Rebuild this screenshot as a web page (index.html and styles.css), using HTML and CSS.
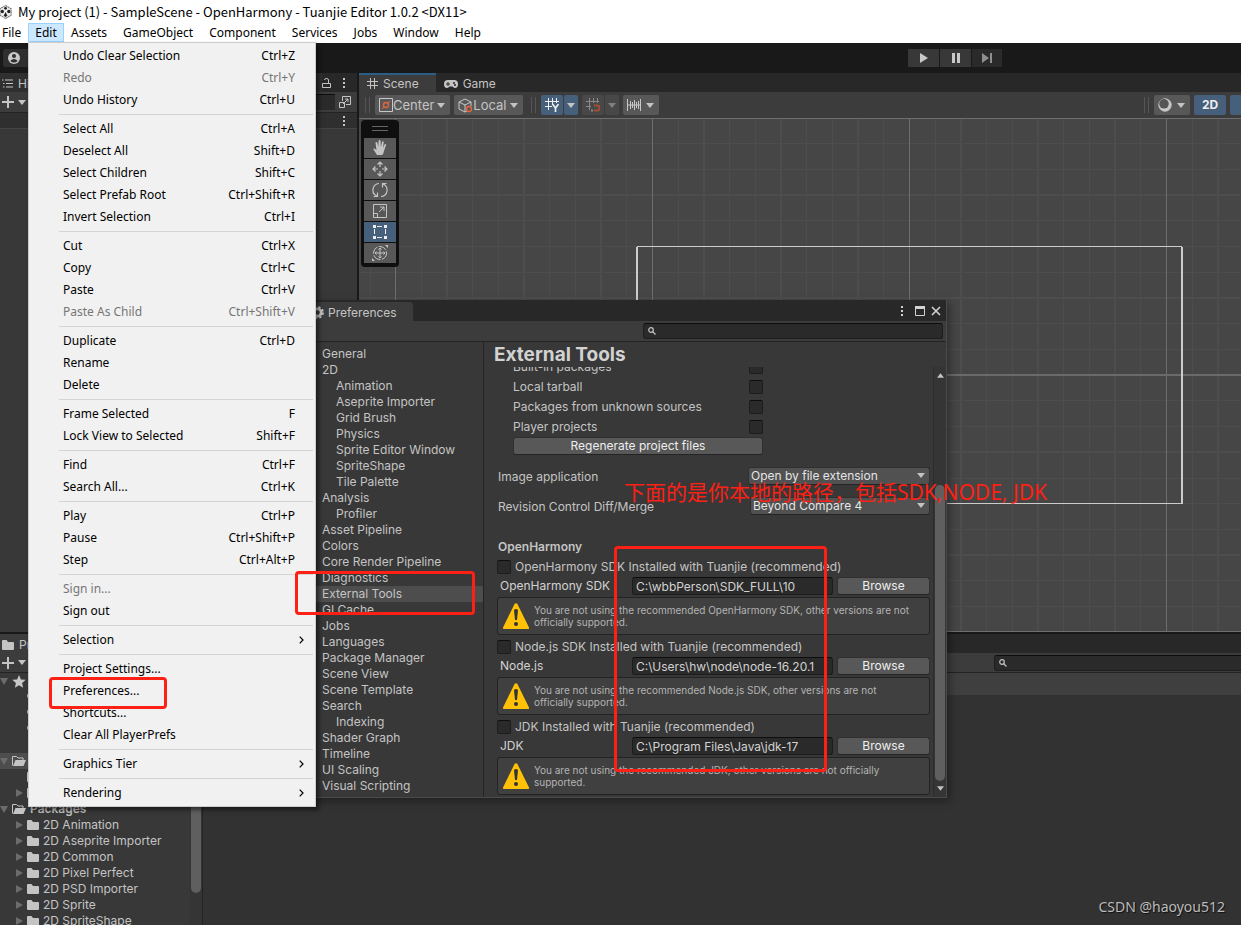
FILE: index.html
```html
<!DOCTYPE html>
<html lang="en">
<head>
<meta charset="utf-8">
<title>My project (1) - SampleScene - OpenHarmony - Tuanjie Editor 1.0.2</title>
<link rel="stylesheet" href="styles.css">
</head>
<body>
<svg class="defs" aria-hidden="true">
  <symbol id="kebab" viewBox="0 0 4 12"><path d="M1 1h2v2H1zM1 5h2v2H1zM1 9h2v2H1z" fill="currentColor"/></symbol>
  <symbol id="caret" viewBox="0 0 8 5"><path d="M0 0h8L4 5z" fill="currentColor"/></symbol>
  <symbol id="fold" viewBox="0 0 8 8"><path d="M1 0l7 4-7 4z" fill="currentColor"/></symbol>
  <symbol id="folder" viewBox="0 0 12 10"><path d="M0 1q0-1 1-1h3.500l1.500 2H11q1 0 1 1v6q0 1-1 1H1q-1 0-1-1z" fill="currentColor"/></symbol>
  <symbol id="folder-open" viewBox="0 0 14 10"><path d="M.5 9.500V.5h4l1.500 1.500h5v2" fill="none" stroke="currentColor"/><path d="M3.500 4H14l-2.500 6H1z" fill="currentColor"/></symbol>
  <symbol id="search" viewBox="0 0 8 8"><circle cx="3" cy="3" r="2.300" fill="none" stroke="currentColor" stroke-width="1.200"/><path d="M4.600 4.600L7.500 7.500" stroke="currentColor" stroke-width="1.300"/></symbol>
  <symbol id="plus" viewBox="0 0 12 12"><path d="M6 0v12M0 6h12" stroke="currentColor" stroke-width="2"/></symbol>
  <symbol id="chevron" viewBox="0 0 5 8"><path d="M.7.7L4 4 .7 7.300" fill="none" stroke="currentColor" stroke-width="1.200"/></symbol>
  <symbol id="warning" viewBox="0 0 26 26"><path d="M11.700.8q1.300-1.300 2.600 0L26 24.500q.2 1.500-1.200 1.500H1.200Q-.2 26 0 24.500z" fill="#ffc107"/><path d="M11 7q2-1.800 4 0l-1 10h-2z" fill="#333"/><circle cx="13" cy="21" r="2" fill="#333"/></symbol>
</svg>

<header class="titlebar">
  <svg class="app-icon" viewBox="0 0 14 16"><path d="M6 1l6 3.500v7L6 15 0 11.500v-7z" fill="#eee" stroke="#777" stroke-width="1.200" stroke-dasharray="2 .6"/><circle cx="6" cy="4" r="1.500" fill="#222"/><circle cx="2.500" cy="7.500" r="1.800" fill="#222"/><circle cx="9.500" cy="7.500" r="1.800" fill="#222"/><path d="M4 12l2-4 2 4-2 1.500z" fill="#222"/></svg>
  <span>My project (1) - SampleScene - OpenHarmony - Tuanjie Editor 1.0.2 &lt;DX11&gt;</span>
</header>

<nav class="menubar">
  <button class="first">File</button>
  <div class="menu-host">
    <button class="open">Edit</button>
    <div class="menu">
      <button><span>Undo Clear Selection</span><kbd>Ctrl+Z</kbd></button>
      <button disabled><span>Redo</span><kbd>Ctrl+Y</kbd></button>
      <button><span>Undo History</span><kbd>Ctrl+U</kbd></button>
      <hr>
      <button><span>Select All</span><kbd>Ctrl+A</kbd></button>
      <button><span>Deselect All</span><kbd>Shift+D</kbd></button>
      <button><span>Select Children</span><kbd>Shift+C</kbd></button>
      <button><span>Select Prefab Root</span><kbd>Ctrl+Shift+R</kbd></button>
      <button><span>Invert Selection</span><kbd>Ctrl+I</kbd></button>
      <hr>
      <button><span>Cut</span><kbd>Ctrl+X</kbd></button>
      <button><span>Copy</span><kbd>Ctrl+C</kbd></button>
      <button><span>Paste</span><kbd>Ctrl+V</kbd></button>
      <button disabled><span>Paste As Child</span><kbd>Ctrl+Shift+V</kbd></button>
      <hr>
      <button><span>Duplicate</span><kbd>Ctrl+D</kbd></button>
      <button><span>Rename</span></button>
      <button><span>Delete</span></button>
      <hr>
      <button><span>Frame Selected</span><kbd>F</kbd></button>
      <button><span>Lock View to Selected</span><kbd>Shift+F</kbd></button>
      <hr>
      <button><span>Find</span><kbd>Ctrl+F</kbd></button>
      <button><span>Search All...</span><kbd>Ctrl+K</kbd></button>
      <hr>
      <button><span>Play</span><kbd>Ctrl+P</kbd></button>
      <button><span>Pause</span><kbd>Ctrl+Shift+P</kbd></button>
      <button><span>Step</span><kbd>Ctrl+Alt+P</kbd></button>
      <hr>
      <button disabled><span>Sign in...</span></button>
      <button><span>Sign out</span></button>
      <hr>
      <button class="sub"><span>Selection</span><svg><use href="#chevron"/></svg></button>
      <hr>
      <button><span>Project Settings...</span></button>
      <button><span>Preferences...</span></button>
      <button><span>Shortcuts...</span></button>
      <button><span>Clear All PlayerPrefs</span></button>
      <hr>
      <button class="sub"><span>Graphics Tier</span><svg><use href="#chevron"/></svg></button>
      <hr>
      <button class="sub"><span>Rendering</span><svg><use href="#chevron"/></svg></button>
    </div>
  </div>
  <button>Assets</button>
  <button>GameObject</button>
  <button>Component</button>
  <button>Services</button>
  <button>Jobs</button>
  <button>Window</button>
  <button>Help</button>
</nav>

<div class="main-toolbar">
  <button class="account" aria-label="Account"><svg width="12" height="12" viewBox="0 0 12 12"><circle cx="6" cy="6" r="6" fill="#c8c8c8"/><circle cx="6" cy="4" r="2" fill="#2f2f2f"/><path d="M2.300 9q3.700-4 7.400 0-3.700 3-7.400 0" fill="#2f2f2f"/></svg></button>
  <div class="play-controls">
    <button aria-label="Play"><svg width="10" height="10" viewBox="0 0 10 10"><path d="M1 0l8 5-8 5z" fill="#c8c8c8"/></svg></button>
    <button aria-label="Pause"><svg width="10" height="10" viewBox="0 0 10 10"><path d="M1 0h3v10H1zM6 0h3v10H6z" fill="#c8c8c8"/></svg></button>
    <button class="dim" aria-label="Step"><svg width="10" height="10" viewBox="0 0 10 10"><path d="M0 0l7 5-7 5zM8 0h2v10H8z" fill="#8f8f8f"/></svg></button>
  </div>
</div>

<main class="docks">
  <section class="hierarchy">
    <div class="tabs">
      <div class="tab"><svg width="11" height="9" viewBox="0 0 11 9"><path d="M3 1h8M4 4.500h7M4 8h7M0 1h1.500M1 4.500h1.500M1 8h1.500" stroke="currentColor"/></svg><span>Hierarchy</span></div>
      <svg class="lock" width="9" height="10" viewBox="0 0 9 10"><path d="M.5 5.500h8v4h-8zM6.500 5.500V2q0-1.500-2-1.500T2.500 2" fill="none" stroke="currentColor"/></svg>
      <svg class="kebab"><use href="#kebab"/></svg>
    </div>
    <div class="tool-row">
      <svg class="plus"><use href="#plus"/></svg><svg class="caret"><use href="#caret"/></svg>
      <div class="mini-search"></div>
      <svg class="expand" width="12" height="12" viewBox="0 0 12 12"><path d="M3.500 5V.5h8v8H7M.5 6.500h5v5h-5zM4 8l5-5M6 3h3v3" fill="none" stroke="currentColor"/></svg>
    </div>
    <div class="scene-row"><svg class="kebab"><use href="#kebab"/></svg></div>
  </section>

  <section class="scene">
    <div class="tabs">
      <div class="tab active"><svg width="11" height="11" viewBox="0 0 11 11"><path d="M3.500 0v11M7.500 0v11M0 3.500h11M0 7.500h11" stroke="currentColor"/></svg><span>Scene</span></div>
      <div class="tab"><svg width="14" height="8" viewBox="0 0 14 8"><path d="M4 0h6q4 0 4 4t-3 4Q10 8 8.500 6.500h-3Q4 8 3 8 0 8 0 4t4-4" fill="currentColor"/><path d="M4 2v4M2 4h4" stroke="#282828"/><circle cx="10" cy="3" r="1" fill="#282828"/><circle cx="11" cy="5" r="1" fill="#282828"/></svg><span>Game</span></div>
    </div>
    <div class="scene-tools">
      <i class="grip"></i>
      <button class="tool"><svg width="14" height="14" viewBox="0 0 14 14"><path d="M.5.5h13v13H.5z" fill="none" stroke="#c8c8c8"/><circle cx="7" cy="7" r="2.500" fill="none" stroke="#e8663c" stroke-width="1.300"/><path d="M3 11l2-2M9 5l2-2" stroke="#e8663c"/></svg><span>Center</span><svg class="caret"><use href="#caret"/></svg></button>
      <button class="tool"><svg width="15" height="15" viewBox="0 0 15 15"><path d="M9 13l-2 1-6-3V4l6-3 6 3v4M1 4l6 3 6-3M7 7v7" fill="none" stroke="#c8c8c8"/><circle cx="11" cy="11" r="2.500" fill="#585858" stroke="#e8663c" stroke-width="1.300"/></svg><span>Local</span><svg class="caret"><use href="#caret"/></svg></button>
      <i class="grip wide"></i>
      <div class="split">
        <button class="tool blue icon" aria-label="Grid"><svg width="14" height="14" viewBox="0 0 14 14"><path d="M3.500 0v12M7.500 0v7M11.500 0v5M0 3.500h14M0 8.500h7" stroke="#eee"/><path d="M7.500 6l3 4 3-4M10.500 10v4" fill="none" stroke="#eee" stroke-width="1.700"/></svg></button><button class="tool blue arrow" aria-label="Grid options"><svg class="caret"><use href="#caret"/></svg></button>
      </div>
      <div class="split off">
        <button class="tool icon" aria-label="Snap"><svg width="14" height="14" viewBox="0 0 14 14"><path d="M3.500 0v12M7.500 0v5M11.500 0v5M0 3.500h13M0 8.500h5" stroke="#888"/><path d="M8 7.500h3.500q2 0 2 2.500t-2 2.500H8" fill="none" stroke="#a14f35" stroke-width="2"/><path d="M5 12.500h2" stroke="#888" stroke-width="2"/></svg></button><button class="tool arrow" aria-label="Snap options"><svg class="caret"><use href="#caret"/></svg></button>
      </div>
      <button class="tool ruler" aria-label="Increment"><svg width="14" height="12" viewBox="0 0 14 12"><path d="M.5 0v12M13.500 0v12M3.500 2v8M5.500 3v6M7.500 1v10M9.500 3v6M11.500 2v8M0 6h14" stroke="#c8c8c8"/></svg><svg class="caret"><use href="#caret"/></svg></button>
      <i class="grip right"></i>
      <button class="tool shade" aria-label="Shading"><svg width="14" height="14" viewBox="0 0 14 14"><circle cx="7" cy="7" r="6.200" fill="#c8c8c8" stroke="#c8c8c8"/><circle cx="6" cy="5.800" r="4.800" fill="#555"/></svg><svg class="caret"><use href="#caret"/></svg></button>
      <button class="tool blue two-d">2D</button>
      <button class="tool blue cut" aria-label="Lighting"></button>
    </div>
    <div class="viewport">
      <svg class="grid" aria-hidden="true">
        <g transform="translate(-359 -118)">
          <path class="thin" d="M370.500 118v514M421.500 118v514M472.500 118v514M498.500 118v514M549.500 118v514M575.500 118v514M626.500 118v514M678.500 118v514M729.500 118v514M755.500 118v514M806.500 118v514M832.500 118v514M883.500 118v514M935.500 118v514M986.500 118v514M1012.500 118v514M1063.500 118v514M1089.500 118v514M1140.500 118v514M1192.500 118v514M359 143.500h1600M359 169.500h1600M359 220.500h1600M359 246.500h1600M359 272.500h1600M359 323.500h1600M359 349.500h1600M359 400.500h1600M359 426.500h1600M359 478.500h1600M359 503.500h1600M359 529.500h1600M359 580.500h1600M359 606.500h1600"/>
          <path class="mid" d="M447 118v514M524 118v514M601 118v514M704 118v514M781 118v514M858 118v514M961 118v514M1038 118v514M1115 118v514M1218 118v514M359 195h1600M359 298h1600M359 452h1600M359 555h1600"/>
          <path class="strong" d="M395.500 118v514M652.500 118v514M909.500 118v514M1166.500 118v514M359 118.500h1600M359 631.500h1600"/>
          <path class="axis" d="M359 375h1600"/>
          <path class="canvas-h" d="M637 246.500h545M637 503.500h545"/>
          <path class="canvas-v" d="M637 247v257M1182 247v257"/>
        </g>
      </svg>
      <div class="tool-strip">
        <i></i>
        <button aria-label="Hand"><svg width="16" height="16" viewBox="0 0 16 16"><path d="M5 15L1.500 9.500q-.3-1.300 1-1L4.500 10 3.500 3q0-1 .8-1T5.500 3l.8 4 .3-6q.2-1 1-1t1 1l.2 6 1.200-5q.3-1 1-.8t.7 1L11 8l1.500-3.500q.5-.8 1.200-.4t.3 1.200L12 11q-.5 3-2 4z" fill="currentColor"/></svg></button>
        <button aria-label="Move"><svg width="16" height="16" viewBox="0 0 16 16"><path d="M8 1v5M8 10v5M1 8h5M10 8h5M5.500 3.500L8 1l2.500 2.500M5.500 12.500L8 15l2.500-2.500M3.500 5.500L1 8l2.500 2.500M12.500 5.500L15 8l-2.500 2.500" fill="none" stroke="currentColor" stroke-width="1.200"/></svg></button>
        <button aria-label="Rotate"><svg width="16" height="16" viewBox="0 0 16 16"><path d="M7 1.500A6.500 6.500 0 0 0 5 14M1.500 14.500H5.500V10.500M9 14.500A6.500 6.500 0 0 0 11 2M14.500 1.500H10.500V5.500" fill="none" stroke="currentColor" stroke-width="1.200"/></svg></button>
        <button aria-label="Scale"><svg width="16" height="16" viewBox="0 0 16 16"><path d="M1.500 1.500h13v13h-13zM1.500 10.500h4v4M7 9l5-5M8 4h4v4" fill="none" stroke="currentColor"/></svg></button>
        <button class="on" aria-label="Rect"><svg width="16" height="16" viewBox="0 0 16 16"><path d="M1 1h3v3H1zM12 1h3v3h-3zM1 12h3v3H1zM12 12h3v3h-3z" fill="#eee"/><path d="M5 2.500h6M5 13.500h6M2.500 5v6M13.500 5v6" stroke="#eee" stroke-dasharray="5 1"/></svg></button>
        <button aria-label="Transform"><svg width="16" height="16" viewBox="0 0 16 16"><circle cx="8" cy="8" r="6.500" fill="none" stroke="currentColor" stroke-dasharray="8 1.500"/><path d="M8 3v10M3 8h10M6.500 4.500L8 3l1.500 1.500M6.500 11.500L8 13l1.500-1.500M4.500 6.500L3 8l1.500 1.500M11.500 6.500L13 8l-1.500 1.500" fill="none" stroke="currentColor"/><path d="M13 0h3v3zM0 13l3 3H0z" fill="currentColor"/></svg></button>
      </div>
    </div>
  </section>
</main>

<section class="project">
  <div class="tabs"><div class="tab"><svg width="12" height="10"><use href="#folder"/></svg><span>Project</span></div></div>
  <div class="tool-row">
    <svg class="plus"><use href="#plus"/></svg><svg class="caret"><use href="#caret"/></svg>
    <label class="search"><svg><use href="#search"/></svg><input type="text" aria-label="Search project"></label>
  </div>
  <div class="project-body">
    <div class="tree">
      <div class="tree-row"><svg class="fold down"><use href="#fold"/></svg><svg width="14" height="13" viewBox="0 0 14 13"><path d="M7 0l1.900 4.400 4.800.4-3.600 3.200 1 4.800L7 10.300l-4.100 2.500 1-4.800L.3 4.800l4.800-.4z" fill="#c8c8c8"/></svg></div>
      <div class="tree-row leaf"><svg class="lens"><use href="#search"/></svg></div>
      <div class="tree-row leaf"><svg class="lens"><use href="#search"/></svg></div>
      <div class="tree-row leaf"><svg class="lens"><use href="#search"/></svg></div>
      <div class="tree-row"></div>
      <div class="tree-row picked"><svg class="fold down"><use href="#fold"/></svg><svg width="14" height="10"><use href="#folder-open"/></svg></div>
      <div class="tree-row leaf"><svg width="12" height="10"><use href="#folder"/></svg></div>
      <div class="tree-row child"><svg class="fold"><use href="#fold"/></svg><svg width="12" height="10"><use href="#folder"/></svg></div>
      <div class="tree-row"><svg class="fold down"><use href="#fold"/></svg><svg width="14" height="10"><use href="#folder-open"/></svg><b>Packages</b></div>
      <div class="tree-row child"><svg class="fold"><use href="#fold"/></svg><svg width="12" height="10"><use href="#folder"/></svg><span>2D Animation</span></div>
      <div class="tree-row child"><svg class="fold"><use href="#fold"/></svg><svg width="12" height="10"><use href="#folder"/></svg><span>2D Aseprite Importer</span></div>
      <div class="tree-row child"><svg class="fold"><use href="#fold"/></svg><svg width="12" height="10"><use href="#folder"/></svg><span>2D Common</span></div>
      <div class="tree-row child"><svg class="fold"><use href="#fold"/></svg><svg width="12" height="10"><use href="#folder"/></svg><span>2D Pixel Perfect</span></div>
      <div class="tree-row child"><svg class="fold"><use href="#fold"/></svg><svg width="12" height="10"><use href="#folder"/></svg><span>2D PSD Importer</span></div>
      <div class="tree-row child"><svg class="fold"><use href="#fold"/></svg><svg width="12" height="10"><use href="#folder"/></svg><span>2D Sprite</span></div>
      <div class="tree-row child"><svg class="fold"><use href="#fold"/></svg><svg width="12" height="10"><use href="#folder"/></svg><span>2D SpriteShape</span></div>
    </div>
    <div class="tree-scroll"><i></i></div>
    <div class="assets"><div class="crumbs"></div></div>
  </div>
</section>

<section class="prefs">
  <div class="prefs-tabs">
    <div class="prefs-tab"><svg width="13" height="13" viewBox="0 0 13 13"><circle cx="6.500" cy="6.500" r="3.600" fill="none" stroke="#c8c8c8" stroke-width="2.600"/><circle cx="6.500" cy="6.500" r="5.600" fill="none" stroke="#c8c8c8" stroke-width="1.600" stroke-dasharray="2.400 2"/></svg><span>Preferences</span></div>
    <div class="win-buttons">
      <button aria-label="More"><svg width="4" height="12"><use href="#kebab"/></svg></button>
      <button aria-label="Maximize"><svg width="10" height="10" viewBox="0 0 10 10"><path d="M.5.500h9v9h-9z" fill="none" stroke="#d2d2d2"/><path d="M0 0h10v3H0z" fill="#d2d2d2"/></svg></button>
      <button aria-label="Close"><svg width="10" height="10" viewBox="0 0 10 10"><path d="M1 1l8 8M9 1L1 9" stroke="#d2d2d2" stroke-width="1.600"/></svg></button>
    </div>
  </div>
  <div class="prefs-toolbar"><label class="search"><svg><use href="#search"/></svg><input type="text" aria-label="Search preferences"></label></div>
  <div class="prefs-body">
    <ul class="prefs-nav">
      <li>General</li><li>2D</li><li class="in">Animation</li><li class="in">Aseprite Importer</li><li class="in">Grid Brush</li><li class="in">Physics</li><li class="in">Sprite Editor Window</li><li class="in">SpriteShape</li><li class="in">Tile Palette</li><li>Analysis</li><li class="in">Profiler</li><li>Asset Pipeline</li><li>Colors</li><li>Core Render Pipeline</li><li>Diagnostics</li><li class="on">External Tools</li><li>GI Cache</li><li>Jobs</li><li>Languages</li><li>Package Manager</li><li>Scene View</li><li>Scene Template</li><li>Search</li><li class="in">Indexing</li><li>Shader Graph</li><li>Timeline</li><li>UI Scaling</li><li>Visual Scripting</li>
    </ul>
    <div class="prefs-pane">
      <h1>External Tools</h1>
      <div class="pane-scroll">
        <div class="pane-content">
          <div class="check-rows">
            <label><span>Built-in packages</span><input type="checkbox"></label>
            <label><span>Local tarball</span><input type="checkbox"></label>
            <label><span>Packages from unknown sources</span><input type="checkbox"></label>
            <label><span>Player projects</span><input type="checkbox"></label>
            <button class="btn">Regenerate project files</button>
          </div>
          <div class="drop-row"><label for="img">Image application</label><div class="drop"><select id="img"><option>Open by file extension</option></select><svg class="caret"><use href="#caret"/></svg></div></div>
          <div class="drop-row"><label for="diff">Revision Control Diff/Merge</label><div class="drop narrow"><select id="diff"><option>Beyond Compare 4</option></select><svg class="caret"><use href="#caret"/></svg></div></div>
          <h2>OpenHarmony</h2>
          <div class="sdk">
            <label class="sdk-check"><input type="checkbox"><span>OpenHarmony SDK Installed with Tuanjie (recommended)</span></label>
            <div class="sdk-path"><label for="p1">OpenHarmony SDK</label><input id="p1" type="text" value="C:\wbbPerson\SDK_FULL\10"><button class="btn">Browse</button></div>
            <div class="help"><svg><use href="#warning"/></svg><p>You are not using the recommended OpenHarmony SDK, other versions are not officially supported.</p></div>
          </div>
          <div class="sdk">
            <label class="sdk-check"><input type="checkbox"><span>Node.js SDK Installed with Tuanjie (recommended)</span></label>
            <div class="sdk-path"><label for="p2">Node.js</label><input id="p2" type="text" value="C:\Users\hw\node\node-16.20.1"><button class="btn">Browse</button></div>
            <div class="help"><svg><use href="#warning"/></svg><p>You are not using the recommended Node.js SDK, other versions are not officially supported.</p></div>
          </div>
          <div class="sdk">
            <label class="sdk-check"><input type="checkbox"><span>JDK Installed with Tuanjie (recommended)</span></label>
            <div class="sdk-path"><label for="p3">JDK</label><input id="p3" type="text" value="C:\Program Files\Java\jdk-17"><button class="btn">Browse</button></div>
            <div class="help"><svg><use href="#warning"/></svg><p>You are not using the recommended JDK, other versions are not officially supported.</p></div>
          </div>
        </div>
        <div class="pane-bar"><svg class="up"><use href="#caret"/></svg><i></i><svg><use href="#caret"/></svg></div>
      </div>
    </div>
  </div>
</section>

<div class="mark mark-menu"></div>
<div class="mark mark-nav"></div>
<div class="mark mark-paths"></div>
<p class="note" lang="zh-CN">下面的是你本地的路径，包括SDK,NODE, JDK</p>
<p class="watermark">CSDN @haoyou512</p>
</body>
</html>
```
FILE: styles.css
```css
* { box-sizing: border-box; }

body {
  margin: 0;
  position: relative;
  height: 100vh;
  overflow: hidden;
  display: flex;
  flex-direction: column;
  background: #191919;
  color: #c4c4c4;
  font: 12px/16px Inter, "Liberation Sans", sans-serif;
}

button, input, select { font: inherit; color: inherit; border: 0; margin: 0; padding: 0; background: none; }
svg { flex: none; display: block; }
p, h1, h2, ul { margin: 0; padding: 0; }
.defs { position: absolute; width: 0; height: 0; }
.caret { width: 8px; height: 5px; }
.kebab { width: 4px; height: 12px; }
.plus { width: 12px; height: 12px; }

/* Title and menu bars */
.titlebar, .menubar { background: #fff; color: #000; flex: none; }
.titlebar { display: flex; align-items: center; gap: 5px; height: 23px; font: 13px/20px "Noto Sans CJK SC", "Noto Sans", sans-serif; }
.app-icon { width: 13px; height: 16px; }
.menubar { display: flex; height: 20px; font: 12px/20px "Noto Sans", sans-serif; }
.menubar > button, .open { height: 20px; padding: 0 9px 0 7px; }
.menubar > .first { width: 28px; padding: 0 0 0 2px; text-align: left; }
.menu-host { position: relative; }
.menubar .open { width: 36px; padding: 0; height: 19px; line-height: 17px; background: #cce8ff; border: 1px solid #99d1ff; }
.menu {
  position: absolute;
  z-index: 5;
  top: 19px;
  left: 0;
  width: 288px;
  padding: 2px;
  border: 1px solid #ccc;
  background: #f1f1f1;
  box-shadow: 3px 3px 4px rgba(0, 0, 0, .5);
}
.menu button { display: flex; align-items: center; justify-content: space-between; width: 100%; height: 22px; padding: 0 18px 0 32px; }
.menu button:disabled { color: #767676; }
.menu .sub { padding-right: 9px; }
.menu svg { width: 5px; height: 8px; }
.menu kbd { font: inherit; }
.menu hr { height: 1px; margin: 3px 0 3px 28px; border: 0; background: #d4d4d4; }

/* Main toolbar */
.main-toolbar { flex: none; display: flex; justify-content: space-between; align-items: center; height: 30px; padding-left: 3px; }
.main-toolbar button { display: flex; align-items: center; justify-content: center; height: 18px; background: #383838; }
.main-toolbar .account { width: 40px; padding-left: 5px; justify-content: flex-start; background: #2f2f2f; border-radius: 2px; }
.play-controls { display: flex; gap: 1px; margin-right: 239px; }
.play-controls button { width: 31px; }
.play-controls .dim { width: 30px; background: #2a2a2a; }

/* Docked panels */
.docks { flex: none; display: flex; gap: 2px; height: 559px; }
.tabs { display: flex; align-items: center; height: 19px; background: #282828; flex: none; }
.tab { display: flex; align-items: center; gap: 5px; height: 19px; padding: 2px 8px 0; }
.tab.active { background: #3c3c3c; border-top: 2px solid #2c5d87; padding-top: 0; }
.tool-row { display: flex; align-items: center; height: 20px; padding-left: 2px; gap: 5px; background: #3c3c3c; flex: none; }
.hierarchy { flex: none; width: 357px; display: flex; flex-direction: column; background: #383838; }
.hierarchy .tabs, .scene-row { padding-right: 11px; }
.hierarchy .tab { padding: 2px 0 0 2px; flex: 1; background: #303030; }
.hierarchy .lock { margin-right: 11px; }
.hierarchy .tool-row { padding-right: 6px; gap: 4px; }
.mini-search { flex: 1; height: 16px; background: #2a2a2a; border-top: 1px solid #0d0d0d; }
.scene-row { display: flex; align-items: center; justify-content: flex-end; height: 17px; background: #2f2f2f; border-top: 1px solid #232323; border-bottom: 1px solid #444; }

.scene { flex: 1; min-width: 0; display: flex; flex-direction: column; }
.scene .tab.active { padding-right: 17px; }
.scene-tools { display: flex; align-items: center; height: 26px; padding-left: 6px; gap: 4px; background: #3c3c3c; flex: none; overflow: hidden; }
.grip { flex: none; width: 5px; height: 16px; border: solid #555; border-width: 0 1px; margin-right: 1px; }
.grip.wide { margin: 0 1px 0 4px; }
.grip.right { margin-left: auto; }
.tool { display: flex; flex: none; align-items: center; height: 20px; padding: 0 5px 0 4px; background: #585858; border-radius: 2px; font-size: 13px; }
.tool .caret { margin-left: 3px; }
.tool.ruler .caret, .tool.shade .caret { margin-left: 5px; }
.tool.blue { background: #46607c; }
.split { display: flex; gap: 1px; }
.split .tool { padding: 0 4px; }
.split .tool.arrow { padding: 0 3px; }
.tool.arrow .caret { margin: 0; }
.split.off .tool { background: #484848; color: #808080; }
.tool.two-d { padding: 0 8px; width: 32px; font-size: 12px; font-weight: 700; color: #eee; }
.tool.cut { width: 11px; border-radius: 2px 0 0 2px; }

.viewport { position: relative; flex: 1; background: #464646; overflow: hidden; }
.grid { position: absolute; inset: 0; width: 100%; height: 100%; }
.grid path { fill: none; }
.thin { stroke: #4d4d4d; }
.mid { stroke: #4d4d4d; stroke-width: 2; }
.strong { stroke: #6e6e6e; }
.axis { stroke: #6a6a6a; stroke-width: 2; }
.canvas-h { stroke: #ccc; }
.canvas-v { stroke: #ccc; stroke-width: 2; }
.tool-strip { position: absolute; left: 2px; top: 2px; display: flex; flex-direction: column; gap: 1px; padding: 6px 3px 4px; background: #0f0f0f; border-radius: 4px; }
.tool-strip i { width: 16px; height: 5px; margin: 0 auto 6px; border: solid #666; border-width: 1px 0; }
.tool-strip button { display: flex; align-items: center; justify-content: center; width: 32px; height: 20px; background: #585858; }
.tool-strip .on { background: #46607c; }

/* Project browser */
.project { flex: 1; min-height: 0; margin-top: 2px; display: flex; flex-direction: column; background: #383838; }
.project .tab { padding-left: 2px; width: 90px; background: #3c3c3c; }
.project > .tool-row { border-bottom: 1px solid #232323; gap: 4px; }
.search { display: flex; align-items: center; height: 16px; gap: 5px; padding: 0 4px; border: 1px solid #1e1e1e; border-top-color: #0d0d0d; border-radius: 3px; background: #2a2a2a; }
.search svg { width: 8px; height: 8px; }
.search input { flex: 1; min-width: 0; }
.project .search { width: 247px; margin-left: auto; border-right: 0; border-radius: 3px 0 0 3px; }
.project-body { flex: 1; min-height: 0; display: flex; }
.tree { flex: 1; overflow: hidden; }
.tree-row { display: flex; align-items: center; gap: 4px; height: 16px; white-space: nowrap; }
.tree-row.picked { background: #4d4d4d; }
.tree-row.leaf { padding-left: 27px; }
.tree-row.child { padding-left: 15px; }
.tree-row b { font-weight: 600; }
.fold { width: 8px; height: 8px; color: #6c6c6c; }
.fold.down { transform: rotate(90deg); }
.lens { width: 10px; height: 10px; }
.tree-scroll { flex: none; width: 13px; padding: 0 1px; background: #353535; border-right: 1px solid #232323; }
.tree-scroll i { display: block; height: 220px; border-radius: 5px; background: #5f5f5f; }
.assets { flex: none; width: calc(100% - 203px); background: #323232; }
.crumbs { height: 22px; background: #3f3f3f; }

/* Preferences window */
.prefs {
  position: absolute;
  left: 308px;
  top: 300px;
  width: 639px;
  height: 498px;
  display: flex;
  flex-direction: column;
  border: 1px solid #4a4a4a;
  border-width: 0 1px 1px 0;
  background: #383838;
  box-shadow: 3px 3px 8px rgba(0, 0, 0, .35);
}
.prefs-tabs { display: flex; justify-content: space-between; height: 21px; background: #282828; flex: none; }
.prefs-tab { display: flex; align-items: center; gap: 4px; width: 105px; height: 19px; margin-top: 2px; padding-left: 3px; padding-top: 2px; background: #3c3c3c; border-radius: 0 3px 0 0; }
.win-buttons { display: flex; align-items: center; gap: 6px; padding-right: 5px; color: #d2d2d2; }
.win-buttons button:first-child { margin-right: 5px; }
.prefs-toolbar { display: flex; justify-content: flex-end; align-items: center; height: 21px; padding-right: 3px; background: #3c3c3c; border-bottom: 1px solid #232323; flex: none; }
.prefs .search { width: 300px; }
.prefs-body { flex: 1; min-height: 0; display: flex; }
.prefs-nav { flex: none; width: 176px; padding-top: 4px; list-style: none; border-right: 1px solid #232323; }
.prefs-nav li { padding-left: 14px; }
.prefs-nav .in { padding-left: 28px; }
.prefs-nav .on { background: #4d4d4d; }
.prefs-pane { flex: 1; min-width: 0; display: flex; flex-direction: column; }
.prefs-pane h1 { height: 25px; padding-left: 10px; font-size: 19px; line-height: 25px; font-weight: 700; color: #d2d2d2; }
.pane-scroll { flex: 1; min-height: 0; display: flex; overflow: hidden; }
.pane-content { flex: 1; min-width: 0; display: flex; flex-direction: column; padding: 0 3px 0 13px; margin-top: -10px; }
.check-rows { display: flex; flex-direction: column; width: 250px; margin-left: 16px; margin-bottom: 12px; }
.check-rows label { display: flex; justify-content: space-between; align-items: center; height: 20px; white-space: nowrap; }
input[type="checkbox"] { appearance: none; flex: none; width: 14px; height: 14px; background: #2a2a2a; border: 1px solid #1c1c1c; border-top-color: #0d0d0d; border-radius: 2px; }
.btn { height: 18px; background: #585858; border: 1px solid #303030; border-bottom-color: #242424; border-radius: 3px; color: #eee; line-height: 16px; }
.drop-row { display: flex; align-items: center; justify-content: space-between; height: 20px; margin-bottom: 10px; padding-left: 1px; }
.drop { position: relative; width: 182px; align-self: flex-start; }
.drop.narrow { width: 180px; }
.drop select { appearance: none; display: block; width: 100%; height: 18px; padding-left: 2px; background: #515151; border: 1px solid #303030; border-bottom-color: #242424; border-radius: 3px; color: #e4e4e4; }
.drop .caret { position: absolute; right: 5px; top: 6px; pointer-events: none; }
.prefs-pane h2 { height: 20px; margin-top: 10px; padding-left: 1px; font-size: 12px; line-height: 20px; font-weight: 600; }
.sdk { display: flex; flex-direction: column; height: 80px; }
.sdk-check { display: flex; align-items: center; gap: 4px; height: 20px; white-space: nowrap; }
.sdk-path { display: flex; align-items: center; height: 18px; margin-bottom: 2px; padding-left: 3px; }
.sdk-path label { flex: 1; color: #d2d2d2; }
.sdk-path input { width: 201px; height: 18px; padding-left: 3px; background: #2a2a2a; border: 1px solid #1c1c1c; border-top-color: #0d0d0d; border-radius: 3px; color: #d2d2d2; }
.sdk-path .btn { width: 93px; margin-left: 4px; }
.help { display: flex; align-items: center; gap: 5px; height: 38px; padding: 0 15px 0 5px; background: #404040; border: 1px solid #232323; border-radius: 3px; font-size: 10px; line-height: 12px; color: #b4b4b4; }
.help svg { width: 26px; height: 26px; }
.pane-bar { flex: none; width: 13px; display: flex; flex-direction: column; align-items: center; padding: 6px 0; background: #353535; border-left: 1px solid #2c2c2c; }
.pane-bar svg { width: 7px; height: 5px; }
.pane-bar .up { transform: rotate(180deg); }
.pane-bar i { width: 10px; height: 296px; margin-top: auto; margin-bottom: 5px; border-radius: 5px; background: #5f5f5f; }

/* Annotations */
.mark { position: absolute; z-index: 6; border: 3px solid #fc2015; border-radius: 4px; }
.mark-menu { left: 49px; top: 677px; width: 118px; height: 32px; }
.mark-nav { left: 295px; top: 571px; width: 180px; height: 44px; }
.mark-paths { left: 614px; top: 546px; width: 213px; height: 226px; }
.note { position: absolute; z-index: 6; left: 624px; top: 477px; font: 21px/30px "Noto Sans", "Noto Sans CJK SC", sans-serif; color: #fc2015; white-space: nowrap; }
.watermark { position: absolute; right: 16px; bottom: 8px; font: 14px/20px "Noto Sans", sans-serif; color: #bbb; text-shadow: 1px 1px 1px #111; white-space: nowrap; }
```
